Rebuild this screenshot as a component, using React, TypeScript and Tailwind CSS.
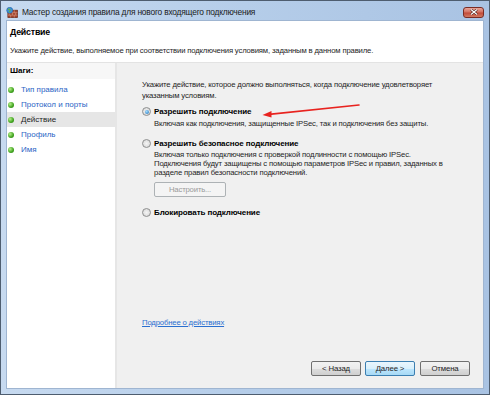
import React from "react";

const font = { fontFamily: '"Liberation Sans", Arial, sans-serif' };

function FirewallIcon() {
	return (
		<svg width="12" height="11" viewBox="0 0 13 12" className="shrink-0">
			<rect x="2" y="3.5" width="10.5" height="8" fill="#a4432c" stroke="#6b2a1a" strokeWidth="0.8" />
			<path d="M2 6.2H12.5M2 8.9H12.5M5 3.5V6.2M9 3.5V6.2M3.5 6.2V8.9M7 6.2V8.9M10.5 6.2V8.9M5 8.9V11.5M9 8.9V11.5" stroke="#d9a48f" strokeWidth="0.6" />
			<circle cx="4" cy="3.6" r="3.3" fill="#3f8fd6" stroke="#1d5f9e" strokeWidth="0.6" />
			<path d="M2.2 2.8C3 1.8 4 2.4 4.4 3.2C4.8 4.2 3.6 4.6 3.2 5.6" stroke="#5fb34a" strokeWidth="1.2" fill="none" />
		</svg>
	);
}

function Dot() {
	return <span className="w-[6px] h-[6px] rounded-full bg-[radial-gradient(circle_at_35%_35%,#b6f08a,#3fa21f_60%,#2b7a12)] shrink-0" />;
}

function Radio({ checked }: { checked?: boolean }) {
	return (
		<span className="w-[9px] h-[9px] rounded-full border border-[#8e8f8f] bg-[radial-gradient(circle_at_50%_50%,#f4f4f4,#d4d4d4)] flex items-center justify-center shrink-0">
			{checked && <span className="w-[4px] h-[4px] rounded-full bg-[radial-gradient(circle_at_40%_35%,#9fdcff,#1f6fb8)]" />}
		</span>
	);
}

function WinButton({ children, primary }: { children: React.ReactNode; primary?: boolean }) {
	return (
		<div
			className={
				"w-[50px] h-[15px] rounded-[2px] border flex items-center justify-center text-[7.8px] text-[#1e1e1e] " +
				(primary
					? "border-[#3c7fb1] bg-[linear-gradient(#eaf6fd,#d9f0fc_50%,#bee6fd_51%,#a7d9f5)]"
					: "border-[#707070] bg-[linear-gradient(#f2f2f2,#ebebeb_50%,#dddddd_51%,#cfcfcf)]")
			}
		>
			{children}
		</div>
	);
}

const steps = ["Тип правила", "Протокол и порты", "Действие", "Профиль", "Имя"];

export default function App() {
	return (
		<div className="w-[490px] h-[395px] relative overflow-hidden bg-[linear-gradient(90deg,#c7daf0,#b5cde9_50%,#a9c3e3)] border border-[#4e5d6f] flex flex-col" style={font}>
			{/* title bar */}
			<div className="h-[19px] flex items-center pl-[5px] pr-[5px] pt-[3px] shrink-0">
				<FirewallIcon />
				<span className="ml-[4px] text-[8.4px] tracking-[-0.2px] text-[#1b1b1b]">Мастер создания правила для нового входящего подключения</span>
				<div className="ml-auto w-[21px] h-[11px] rounded-[3px] border border-[#7a2c24] bg-[linear-gradient(#e8a59a,#d2705f_45%,#c24a38_55%,#d07a62)] flex items-center justify-center">
					<svg width="8" height="6" viewBox="0 0 8 6">
						<path d="M1 0.6L7 5.4M7 0.6L1 5.4" stroke="#3a1510" strokeWidth="2.3" />
						<path d="M1 0.6L7 5.4M7 0.6L1 5.4" stroke="#ffffff" strokeWidth="1.3" />
					</svg>
				</div>
			</div>

			{/* client area */}
			<div className="mx-[5px] h-[369px] flex flex-col border border-[#9fb5d1] bg-white">
				<div className="h-[41px] bg-white px-[3px] pt-[4px] shrink-0">
					<div className="text-[8.8px] font-bold tracking-[-0.2px] text-black leading-[14px]">Действие</div>
					<div className="mt-[6px] text-[7.7px] tracking-[-0.15px] text-[#1e1e1e] leading-[11px]">
						Укажите действие, выполняемое при соответствии подключения условиям, заданным в данном правиле.
					</div>
				</div>

				<div className="flex-1 flex bg-[#f0f0f0] border-t border-[#e3e3e3]">
					{/* steps */}
					<div className="w-[110px] bg-white border-r-2 border-[#e6e6e6] flex flex-col">
						<div className="h-[16px] bg-[#f7f7f7] px-[3px] flex items-center text-[8px] font-bold text-black">Шаги:</div>
						<div className="mt-[3px] flex flex-col">
							{steps.map((s) => (
								<div
									key={s}
									className={"h-[15px] flex items-center gap-[7px] pl-[1px] text-[8px] " + (s === "Действие" ? "bg-[#e6e6e6] text-[#1e1e1e]" : "text-[#2a64c5]")}
								>
									<Dot />
									<span>{s}</span>
								</div>
							))}
						</div>
					</div>

					{/* main pane */}
					<div className="flex-1 flex flex-col pl-[25px] pr-[13px] pt-[16px] pb-[12px] text-[7.7px] tracking-[-0.15px] leading-[11px] text-[#1e1e1e]">
						<div>
							Укажите действие, которое должно выполняться, когда подключение удовлетворяет
							<br />
							указанным условиям.
						</div>

						<div className="mt-[5px] h-[11px] flex items-center gap-[3px]">
							<Radio checked />
							<span className="font-bold text-black text-[8px] tracking-[-0.1px]">Разрешить подключение</span>
						</div>
						<div className="pl-[12px] mt-[1px]">Включая как подключения, защищенные IPSec, так и подключения без защиты.</div>

						<div className="mt-[9px] h-[11px] flex items-center gap-[3px]">
							<Radio />
							<span className="font-bold text-black text-[8px] tracking-[-0.1px]">Разрешить безопасное подключение</span>
						</div>
						<div className="pl-[12px] mt-[1px] leading-[9px]">
							Включая только подключения с проверкой подлинности с помощью IPSec.
							<br />
							Подключения будут защищены с помощью параметров IPSec и правил, заданных в
							<br />
							разделе правил безопасности подключений.
						</div>
						<div className="ml-[12px] mt-[5px] w-[72px] h-[15px] rounded-[2px] border border-[#adb2b5] bg-[#f4f4f4] flex items-center justify-center text-[#9a9a9a]">
							Настроить...
						</div>

						<div className="mt-[10px] h-[11px] flex items-center gap-[3px]">
							<Radio />
							<span className="font-bold text-black text-[8px] tracking-[-0.1px]">Блокировать подключение</span>
						</div>

						<div className="mt-auto text-[#2a6fd0] underline">Подробнее о действиях</div>

						<div className="mt-[33px] flex justify-end">
							<WinButton>&lt; Назад</WinButton>
							<div className="ml-[4px]"><WinButton primary>Далее &gt;</WinButton></div>
							<div className="ml-[5px]"><WinButton>Отмена</WinButton></div>
						</div>
					</div>
				</div>
			</div>

			{/* red arrow annotation */}
			<svg className="absolute left-0 top-0 pointer-events-none" width="490" height="395">
				<path d="M358 104L268 113.4" stroke="#e8231f" strokeWidth="1.6" strokeLinecap="round" />
				<path d="M261.5 114L270.5 110L270.5 116.6Z" fill="#e8231f" />
			</svg>
		</div>
	);
}
